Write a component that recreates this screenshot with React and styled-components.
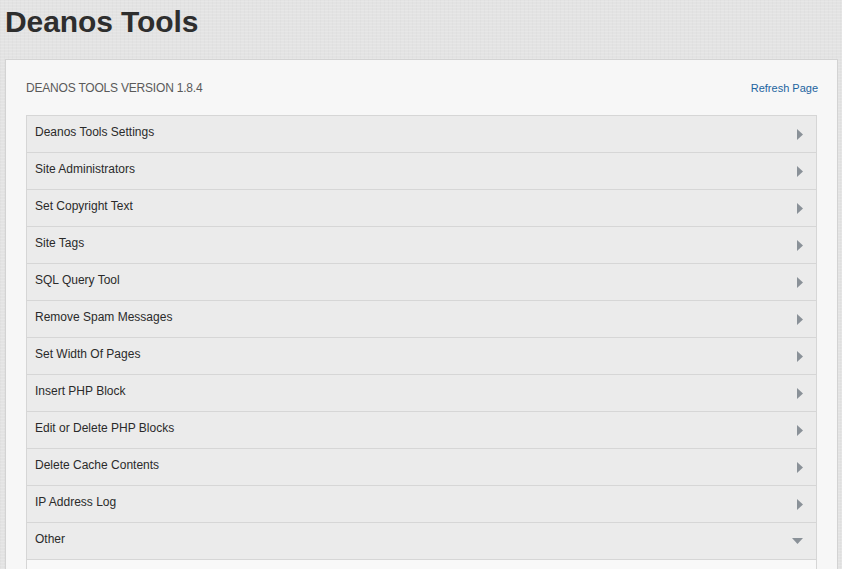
import React from 'react';
import styled, { createGlobalStyle } from 'styled-components';

const GlobalStyle = createGlobalStyle`
  html, body {
    margin: 0;
    padding: 0;
  }
  body {
    font-family: "Liberation Sans", Arial, sans-serif;
    background-color: #e3e3e3;
    background-image:
      repeating-linear-gradient(0deg, rgba(255,255,255,0.14) 0 1px, transparent 1px 3px),
      repeating-linear-gradient(90deg, rgba(0,0,0,0.02) 0 1px, transparent 1px 4px);
    color: #333;
  }
`;

const Page = styled.div`
  padding: 0 4px 0 5px;
  min-height: 569px;
`;

const Title = styled.h1`
  margin: 0;
  padding-top: 4px;
  height: 55px;
  font-size: 30px;
  letter-spacing: -0.1px;
  font-weight: bold;
  color: #2e2e2e;
  line-height: 36px;
`;

const Panel = styled.div`
  background: #f7f7f7;
  border: 1px solid #d3d3d3;
  padding: 0 20px 20px 20px;
`;

const PanelHeader = styled.div`
  display: flex;
  align-items: center;
  justify-content: space-between;
  height: 55px;
`;

const Version = styled.span`
  font-size: 12px;
  letter-spacing: -0.2px;
  color: #5a5a5a;
  text-transform: uppercase;
`;

const RefreshLink = styled.a`
  font-size: 11px;
  color: #1d64a0;
  text-decoration: none;
  margin-right: -1px;
`;

const List = styled.div`
  border: 1px solid #d6d6d6;
  border-bottom: none;
`;

const Row = styled.div`
  display: flex;
  align-items: center;
  justify-content: space-between;
  height: 36px;
  padding: 0 12px 0 8px;
  background: #ebebeb;
  border-bottom: 1px solid #d6d6d6;
  font-size: 12px;
  color: #2a2a2a;
`;

const Label = styled.span`
  margin-bottom: 4px;
`;

const Content = styled.div`
  height: 200px;
  background: #f9f9f9;
  border-bottom: 1px solid #d6d6d6;
`;

const Arrow = styled.svg`
  display: block;
  margin-top: ${(p) => (p.$open ? '0' : '1px')};
`;

const items = [
  'Deanos Tools Settings',
  'Site Administrators',
  'Set Copyright Text',
  'Site Tags',
  'SQL Query Tool',
  'Remove Spam Messages',
  'Set Width Of Pages',
  'Insert PHP Block',
  'Edit or Delete PHP Blocks',
  'Delete Cache Contents',
  'IP Address Log',
  'Other',
];

function Caret({ open }) {
  if (open) {
    return (
      <Arrow $open width="12" height="7" viewBox="0 0 12 7">
        <polygon points="0,0 11,0 5.5,6" fill="#8a9198" />
      </Arrow>
    );
  }
  return (
    <Arrow width="8" height="11" viewBox="0 0 8 11">
      <polygon points="1,0 7,5.5 1,11" fill="#8a9198" />
    </Arrow>
  );
}

export default function App() {
  return (
    <>
      <GlobalStyle />
      <Page>
        <Title>Deanos Tools</Title>
        <Panel>
          <PanelHeader>
            <Version>Deanos Tools Version 1.8.4</Version>
            <RefreshLink href="#">Refresh Page</RefreshLink>
          </PanelHeader>
          <List>
            {items.map((label, i) => (
              <Row key={label}>
                <Label>{label}</Label>
                <Caret open={i === items.length - 1} />
              </Row>
            ))}
            <Content />
          </List>
        </Panel>
      </Page>
    </>
  );
}
